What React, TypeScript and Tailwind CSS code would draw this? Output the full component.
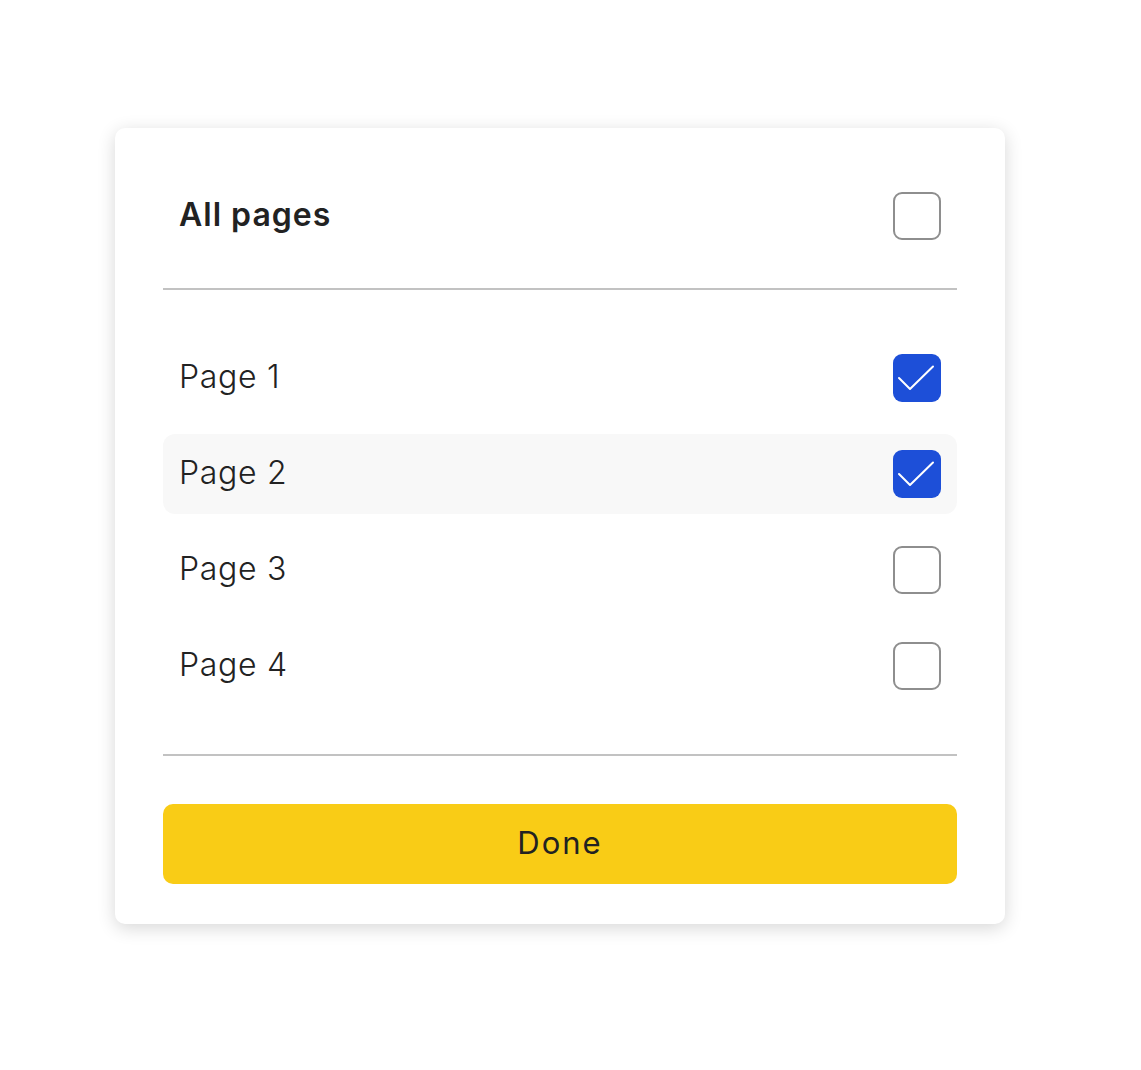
import { useState } from 'react';

const FONT = { fontFamily: 'Inter, "Open Sans", sans-serif' };

function CheckBox({ checked }: { checked: boolean }) {
  if (checked) {
    return (
      <div className="w-12 h-12 rounded-[9px] bg-[#1d4fd8] flex-shrink-0">
        <svg width="48" height="48" viewBox="0 0 48 48" fill="none">
          <path d="M6 24 L17 35 L40 12.5" stroke="white" strokeWidth="2" strokeLinecap="round" strokeLinejoin="round" />
        </svg>
      </div>
    );
  }
  return <div className="w-12 h-12 rounded-[9px] border-2 border-[#8e8e8e] bg-white flex-shrink-0" />;
}

export default function App() {
  const [pages, setPages] = useState([true, true, false, false]);

  const toggle = (i: number) => {
    const next = [...pages];
    next[i] = !next[i];
    setPages(next);
  };

  return (
    <div className="min-h-screen bg-white pt-[128px] pl-[115px]" style={FONT}>
      <div className="w-[890px] bg-white rounded-[10px] shadow-[0_4px_18px_rgba(0,0,0,0.16)] px-12 pt-12 pb-10 text-[#222]">
        <div className="flex items-center justify-between h-20 px-4">
          <span className="text-[32px] leading-none font-semibold tracking-[1px] -mt-[2px]">All pages</span>
          <CheckBox checked={pages.every(Boolean)} />
        </div>
        <div className="h-[2px] bg-[#c2c2c2] mt-8" />
        <div className="flex flex-col gap-4 py-12">
          {pages.map((checked, i) => (
            <button
              key={i}
              onClick={() => toggle(i)}
              className={`flex items-center justify-between h-20 px-4 rounded-xl text-left ${i === 1 ? 'bg-[#f8f8f8]' : ''}`}
            >
              <span className="text-[32px] leading-none font-light tracking-[0.7px] -mt-[2px]">Page {i + 1}</span>
              <CheckBox checked={checked} />
            </button>
          ))}
        </div>
        <div className="h-[2px] bg-[#c2c2c2]" />
        <button className="mt-12 w-full h-20 pb-1 rounded-[10px] bg-[#f9cc16] text-[31px] leading-none font-normal tracking-[2px] text-[#222]">
          Done
        </button>
      </div>
    </div>
  );
}
